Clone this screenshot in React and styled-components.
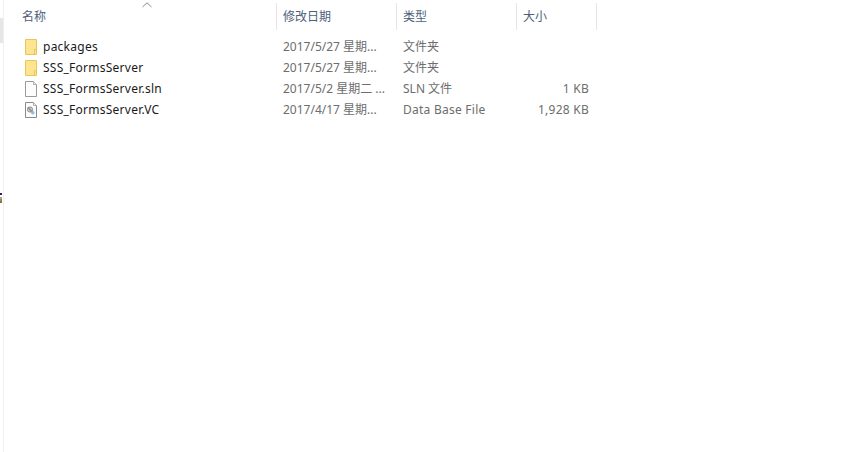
import React from 'react';
import styled, { createGlobalStyle } from 'styled-components';

const GlobalStyle = createGlobalStyle`
    html, body {
        margin: 0;
        padding: 0;
        background: #ffffff;
    }
`

const Window = styled.div`
    width: 860px;
    height: 452px;
    display: flex;
    overflow: hidden;
    font-family: "Noto Sans", "Noto Sans CJK SC", sans-serif;
    font-size: 12px;
    background: #ffffff;
`

const Sidebar = styled.div`
    width: 3px;
    flex: none;
    border-right: 1px solid #f0f0f0;
    padding-top: 18px;
`

const ScrollThumb = styled.div`
    width: 3px;
    height: 25px;
    margin-bottom: 150px;
    background: #e6e6e6;
`

const Pixel = styled.div`
    height: 2px;
    width: 2px;
    background: ${props => props.color};
`

const Listing = styled.div`
    width: 587px;
    margin-left: 6px;
    flex: none;
`

const Header = styled.div`
    position: relative;
    display: grid;
    grid-template-columns: 267px 120px 120px 80px;
    height: 30px;
    padding-top: 3px;
`

const SortArrow = styled.svg`
    position: absolute;
    left: 132px;
    top: 2px;
`

const HeaderCell = styled.div`
    height: 27px;
    padding-left: ${props => props.pad}px;
    border-right: 1px solid #e5e5e5;
    color: #4c607a;
    line-height: 28px;
`

const Rows = styled.div`
    display: flex;
    flex-direction: column;
    padding-top: 3px;
`

const Row = styled.div`
    display: grid;
    grid-template-columns: 267px 120px 120px 80px;
    height: 21px;
    line-height: 21px;
`

const NameCell = styled.div`
    display: flex;
    align-items: center;
    padding-left: 13px;
    gap: 4px;
    color: #1a1a1a;
    letter-spacing: 0.25px;
`

const Cell = styled.div`
    padding-left: 6px;
    color: #6d6d6d;
    white-space: nowrap;
    letter-spacing: ${props => props.spacing || 0}px;
`

const SizeCell = styled.div`
    padding-right: 8px;
    text-align: right;
    color: #6d6d6d;
    letter-spacing: 0.25px;
`

const FolderIcon = () => (
    <svg width="16" height="16" viewBox="0 0 16 16">
        <path d="M2.5 0.5h11v15h-11z" fill="#fde58f" stroke="#e8c65e" />
        <path d="M11.5 15.5v-5h2" fill="none" stroke="#e8c65e" />
    </svg>
)

const FileIcon = () => (
    <svg width="16" height="16" viewBox="0 0 16 16">
        <path d="M2.5 0.5h8l3 3v12h-11z" fill="#fcfcfc" stroke="#9a9a9a" />
        <path d="M10.5 0.5v3h3" fill="#eeeeee" stroke="#b0b0b0" />
    </svg>
)

const DbIcon = () => (
    <svg width="16" height="16" viewBox="0 0 16 16">
        <path d="M2.5 0.5h8l3 3v12h-11z" fill="#fcfcfc" stroke="#8a8a8a" />
        <path d="M10.5 0.5v3h3" fill="#eeeeee" stroke="#b0b0b0" />
        <circle cx="7" cy="7.5" r="2.6" fill="#d5d5d5" stroke="#8a8a8a" />
        <path d="M5 5.5l5 5" stroke="#7a8794" strokeWidth="1.2" />
        <circle cx="9.8" cy="10.8" r="1.8" fill="#8cbde6" />
    </svg>
)

const files = [
    { name: 'packages', icon: <FolderIcon />, date: '2017/5/27 星期...', type: '文件夹', size: '' },
    { name: 'SSS_FormsServer', icon: <FolderIcon />, date: '2017/5/27 星期...', type: '文件夹', size: '' },
    { name: 'SSS_FormsServer.sln', icon: <FileIcon />, date: '2017/5/2 星期二 ...', type: 'SLN 文件', size: '1 KB' },
    { name: 'SSS_FormsServer.VC', icon: <DbIcon />, date: '2017/4/17 星期...', type: 'Data Base File', typeSpacing: 0.25, size: '1,928 KB' },
]

const strayPixels = ['#2a1a6a', '#ffffff', '#e0a020', '#3aa0e0', '#c06010']

const App = () => {
    return (
        <Window>
            <GlobalStyle />
            <Sidebar>
                <ScrollThumb />
                {strayPixels.map((color, i) => <Pixel key={i} color={color} />)}
            </Sidebar>
            <Listing>
                <Header>
                    <SortArrow width="10" height="6" viewBox="0 0 10 6">
                        <path d="M0.5 5L5 0.8L9.5 5" fill="none" stroke="#8a8a8a" />
                    </SortArrow>
                    <HeaderCell pad={12}>名称</HeaderCell>
                    <HeaderCell pad={6}>修改日期</HeaderCell>
                    <HeaderCell pad={6}>类型</HeaderCell>
                    <HeaderCell pad={6}>大小</HeaderCell>
                </Header>
                <Rows>
                    {files.map(file => (
                        <Row key={file.name}>
                            <NameCell>{file.icon}{file.name}</NameCell>
                            <Cell>{file.date}</Cell>
                            <Cell spacing={file.typeSpacing}>{file.type}</Cell>
                            <SizeCell>{file.size}</SizeCell>
                        </Row>
                    ))}
                </Rows>
            </Listing>
        </Window>
    )
}

export default App;
